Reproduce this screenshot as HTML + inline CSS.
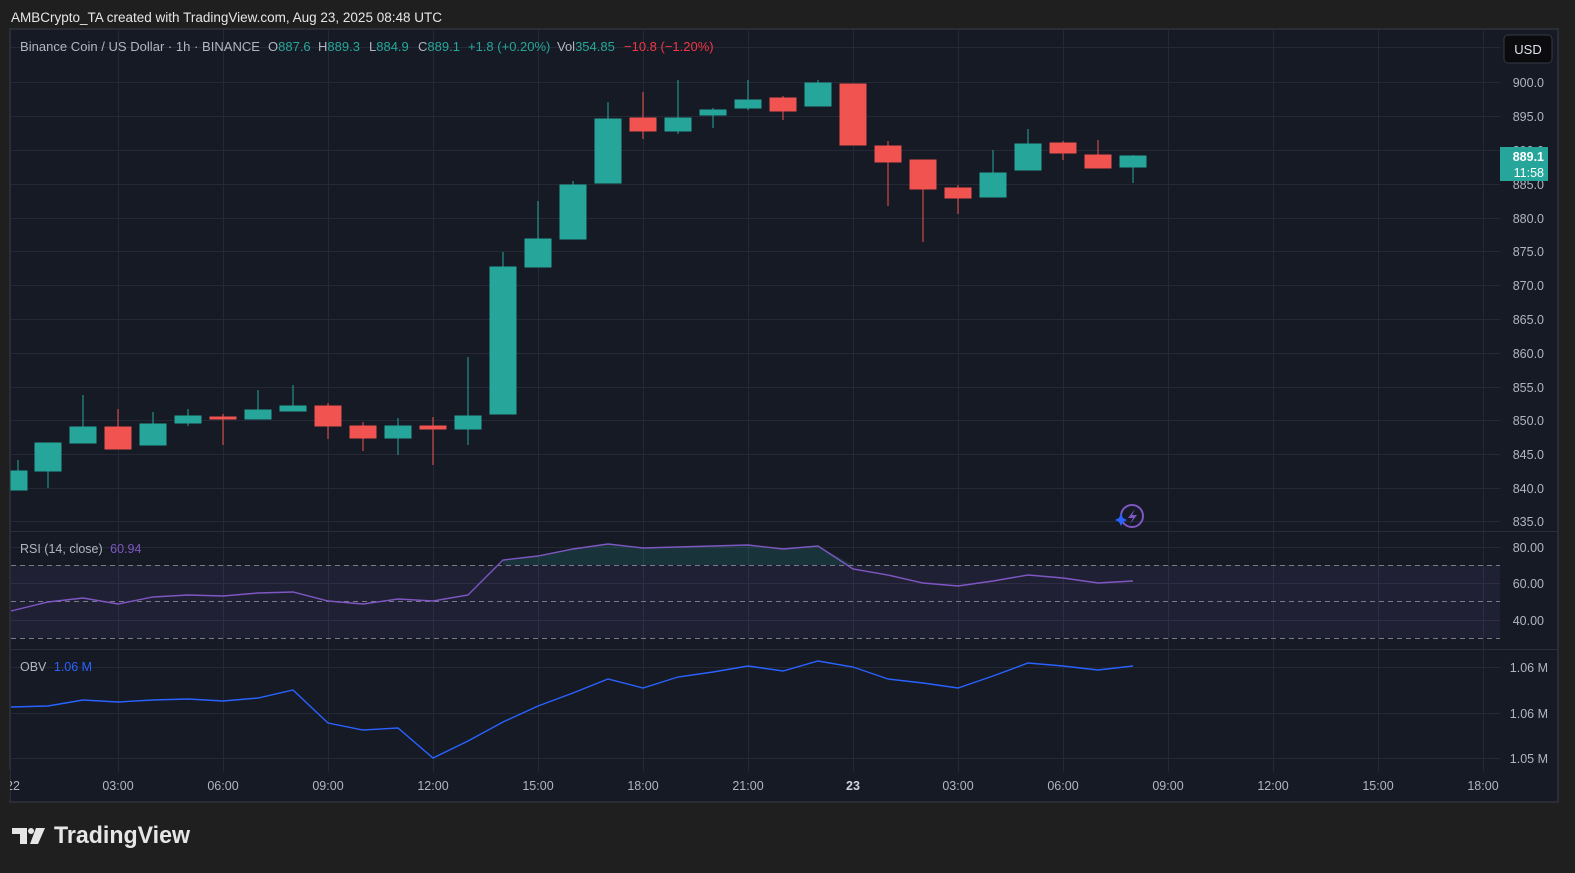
<!DOCTYPE html>
<html><head><meta charset="utf-8"><style>
html,body{margin:0;padding:0;background:#1f1f1f;width:1575px;height:873px;overflow:hidden}
svg{display:block}
text{font-family:"Liberation Sans",sans-serif}
</style></head><body>
<svg width="1575" height="873" xmlns="http://www.w3.org/2000/svg">
<rect width="1575" height="873" fill="#1f1f1f"/>
<text x="11" y="22" font-size="13.5" fill="#e6e6e6">AMBCrypto_TA created with TradingView.com, Aug 23, 2025 08:48 UTC</text>
<rect x="10" y="29" width="1548" height="773" fill="#161a25" stroke="#2a2d36" stroke-width="2"/>
<g stroke="#252935" stroke-width="1">
<line x1="11" x2="1500" y1="47.5" y2="47.5"/><line x1="11" x2="1500" y1="82.5" y2="82.5"/><line x1="11" x2="1500" y1="116.5" y2="116.5"/><line x1="11" x2="1500" y1="150.5" y2="150.5"/><line x1="11" x2="1500" y1="184.5" y2="184.5"/><line x1="11" x2="1500" y1="218.5" y2="218.5"/><line x1="11" x2="1500" y1="251.5" y2="251.5"/><line x1="11" x2="1500" y1="285.5" y2="285.5"/><line x1="11" x2="1500" y1="319.5" y2="319.5"/><line x1="11" x2="1500" y1="353.5" y2="353.5"/><line x1="11" x2="1500" y1="387.5" y2="387.5"/><line x1="11" x2="1500" y1="420.5" y2="420.5"/><line x1="11" x2="1500" y1="454.5" y2="454.5"/><line x1="11" x2="1500" y1="488.5" y2="488.5"/><line x1="11" x2="1500" y1="521.5" y2="521.5"/>
<line x1="11" x2="1500" y1="547.5" y2="547.5"/><line x1="11" x2="1500" y1="583.5" y2="583.5"/><line x1="11" x2="1500" y1="620.5" y2="620.5"/>
<line x1="11" x2="1500" y1="667.5" y2="667.5"/><line x1="11" x2="1500" y1="713.5" y2="713.5"/><line x1="11" x2="1500" y1="758.5" y2="758.5"/>
<line x1="118.5" x2="118.5" y1="30" y2="772"/><line x1="223.5" x2="223.5" y1="30" y2="772"/><line x1="328.5" x2="328.5" y1="30" y2="772"/><line x1="433.5" x2="433.5" y1="30" y2="772"/><line x1="538.5" x2="538.5" y1="30" y2="772"/><line x1="643.5" x2="643.5" y1="30" y2="772"/><line x1="748.5" x2="748.5" y1="30" y2="772"/><line x1="853.5" x2="853.5" y1="30" y2="772"/><line x1="958.5" x2="958.5" y1="30" y2="772"/><line x1="1063.5" x2="1063.5" y1="30" y2="772"/><line x1="1168.5" x2="1168.5" y1="30" y2="772"/><line x1="1273.5" x2="1273.5" y1="30" y2="772"/><line x1="1378.5" x2="1378.5" y1="30" y2="772"/><line x1="1483.5" x2="1483.5" y1="30" y2="772"/>
</g>
<line x1="11" x2="1557" y1="531.5" y2="531.5" stroke="#2a2e39"/>
<line x1="11" x2="1557" y1="649.5" y2="649.5" stroke="#2a2e39"/>
<g font-size="13" fill="#b2b5be">
<text x="20" y="51" textLength="240" lengthAdjust="spacingAndGlyphs">Binance Coin / US Dollar · 1h · BINANCE</text>
<text x="268" y="51">O<tspan fill="#26a69a">887.6</tspan></text>
<text x="318" y="51">H<tspan fill="#26a69a">889.3</tspan></text>
<text x="369" y="51">L<tspan fill="#26a69a">884.9</tspan></text>
<text x="418" y="51">C<tspan fill="#26a69a">889.1</tspan></text>
<text x="468" y="51" fill="#26a69a">+1.8 (+0.20%)</text>
<text x="557" y="51">Vol<tspan fill="#26a69a">354.85</tspan></text>
<text x="624" y="51" fill="#f23645">−10.8 (−1.20%)</text>
</g>
<g stroke-width="1">
<g stroke="#26a69a" fill="#26a69a">
<line x1="18" x2="18" y1="460" y2="490"/><rect x="11" y="471" width="16" height="19"/>
<line x1="48" x2="48" y1="443" y2="488"/><rect x="35" y="443" width="26" height="28"/>
<line x1="83" x2="83" y1="395" y2="443"/><rect x="70" y="427" width="26" height="16"/>
<line x1="153" x2="153" y1="412" y2="445"/><rect x="140" y="424" width="26" height="21"/>
<line x1="188" x2="188" y1="409" y2="426"/><rect x="175" y="416" width="26" height="7"/>
<line x1="258" x2="258" y1="390" y2="419"/><rect x="245" y="410" width="26" height="9"/>
<line x1="293" x2="293" y1="385" y2="411"/><rect x="280" y="406" width="26" height="5"/>
<line x1="398" x2="398" y1="418" y2="455"/><rect x="385" y="426" width="26" height="12"/>
<line x1="468" x2="468" y1="357" y2="445"/><rect x="455" y="416" width="26" height="13"/>
<line x1="503" x2="503" y1="252" y2="414"/><rect x="490" y="267" width="26" height="147"/>
<line x1="538" x2="538" y1="201" y2="267"/><rect x="525" y="239" width="26" height="28"/>
<line x1="573" x2="573" y1="181" y2="239"/><rect x="560" y="185" width="26" height="54"/>
<line x1="608" x2="608" y1="102" y2="183"/><rect x="595" y="119" width="26" height="64"/>
<line x1="678" x2="678" y1="80" y2="134"/><rect x="665" y="118" width="26" height="13"/>
<line x1="713" x2="713" y1="108" y2="128"/><rect x="700" y="110" width="26" height="5"/>
<line x1="748" x2="748" y1="80" y2="110"/><rect x="735" y="100" width="26" height="8"/>
<line x1="818" x2="818" y1="80" y2="106"/><rect x="805" y="83" width="26" height="23"/>
<line x1="993" x2="993" y1="150" y2="197"/><rect x="980" y="173" width="26" height="24"/>
<line x1="1028" x2="1028" y1="129" y2="170"/><rect x="1015" y="144" width="26" height="26"/>
<line x1="1133" x2="1133" y1="155" y2="183"/><rect x="1120" y="156" width="26" height="11"/>
</g>
<g stroke="#f05350" fill="#f05350">
<line x1="118" x2="118" y1="409" y2="449"/><rect x="105" y="427" width="26" height="22"/>
<line x1="223" x2="223" y1="414" y2="445"/><rect x="210" y="417" width="26" height="2"/>
<line x1="328" x2="328" y1="403" y2="439"/><rect x="315" y="406" width="26" height="20"/>
<line x1="363" x2="363" y1="422" y2="451"/><rect x="350" y="426" width="26" height="12"/>
<line x1="433" x2="433" y1="417" y2="465"/><rect x="420" y="426" width="26" height="3"/>
<line x1="643" x2="643" y1="92" y2="139"/><rect x="630" y="118" width="26" height="13"/>
<line x1="783" x2="783" y1="96" y2="120"/><rect x="770" y="98" width="26" height="13"/>
<line x1="853" x2="853" y1="84" y2="145"/><rect x="840" y="84" width="26" height="61"/>
<line x1="888" x2="888" y1="141" y2="206"/><rect x="875" y="146" width="26" height="16"/>
<line x1="923" x2="923" y1="160" y2="242"/><rect x="910" y="160" width="26" height="29"/>
<line x1="958" x2="958" y1="185" y2="214"/><rect x="945" y="188" width="26" height="10"/>
<line x1="1063" x2="1063" y1="141" y2="160"/><rect x="1050" y="143" width="26" height="10"/>
<line x1="1098" x2="1098" y1="140" y2="168"/><rect x="1085" y="155" width="26" height="13"/>
</g>
</g>
<rect x="11" y="565" width="1489" height="73" fill="#7e57c2" fill-opacity="0.1"/>
<g stroke="#787b86" stroke-width="1" stroke-dasharray="5,4">
<line x1="11" x2="1500" y1="565.5" y2="565.5"/><line x1="11" x2="1500" y1="601.5" y2="601.5"/><line x1="11" x2="1500" y1="638.5" y2="638.5"/>
</g>
<polygon points="503,565 503,560 538,556 573,549 608,544 643,548 678,547 713,546 748,545 783,549 818,546 853,565" fill="#26a69a" fill-opacity="0.18"/>
<polyline fill="none" stroke="#7e57c2" stroke-width="1.4" points="11,611 48,602 83,598 118,604 153,597 188,595 223,596 258,593 293,592 328,601 363,604 398,599 433,601 468,595 503,560 538,556 573,549 608,544 643,548 678,547 713,546 748,545 783,549 818,546 853,569 888,575 923,583 958,586 993,581 1028,575 1063,578 1098,583 1133,581"/>
<text x="20" y="553" font-size="12.5" fill="#b2b5be">RSI (14, close) <tspan dx="4" fill="#7e57c2">60.94</tspan></text>
<polyline fill="none" stroke="#2962ff" stroke-width="1.4" points="11,707 48,706 83,700 118,702 153,700 188,699 223,701 258,698 293,690 328,723 363,730 398,728 433,758 468,741 503,722 538,706 573,693 608,679 643,688 678,677 713,672 748,666 783,671 818,661 853,667 888,679 923,683 958,688 993,676 1028,663 1063,666 1098,670 1133,666"/>
<text x="20" y="671" font-size="12.5" fill="#b2b5be">OBV <tspan dx="4" fill="#2962ff">1.06 M</tspan></text>
<circle cx="1132" cy="516" r="11" fill="none" stroke="#7e57c2" stroke-width="2"/>
<path d="M1135 509 L1128 518 L1133 518 L1130 524 L1137 515 L1132 515 Z" fill="#7e57c2"/>
<path d="M1121 513 L1123 518 L1127 520 L1123 522 L1121 526 L1119 522 L1115 520 L1119 518 Z" fill="#2962ff"/>
<rect x="1504" y="35" width="48" height="28" rx="4" fill="#0b0b0d" stroke="#363a45"/>
<text x="1528" y="54" font-size="13" fill="#e0e3eb" text-anchor="middle">USD</text>
<g font-size="12.5" fill="#b2b5be" text-anchor="end">
<text x="1544" y="87">900.0</text><text x="1544" y="121">895.0</text><text x="1544" y="155">890.0</text><text x="1544" y="189">885.0</text><text x="1544" y="223">880.0</text><text x="1544" y="256">875.0</text><text x="1544" y="290">870.0</text><text x="1544" y="324">865.0</text><text x="1544" y="358">860.0</text><text x="1544" y="392">855.0</text><text x="1544" y="425">850.0</text><text x="1544" y="459">845.0</text><text x="1544" y="493">840.0</text><text x="1544" y="526">835.0</text>
<text x="1544" y="552">80.00</text><text x="1544" y="588">60.00</text><text x="1544" y="625">40.00</text>
<text x="1548" y="672">1.06 M</text><text x="1548" y="718">1.06 M</text><text x="1548" y="763">1.05 M</text>
</g>
<rect x="1500" y="147" width="48" height="34" fill="#26a69a"/>
<text x="1544" y="161" font-size="12.5" fill="#ffffff" text-anchor="end" font-weight="bold">889.1</text>
<text x="1544" y="177" font-size="12.5" fill="#ffffff" text-anchor="end">11:58</text>
<g font-size="12.5" fill="#b2b5be" text-anchor="middle">
<text x="13" y="790">22</text><text x="118" y="790">03:00</text><text x="223" y="790">06:00</text><text x="328" y="790">09:00</text><text x="433" y="790">12:00</text><text x="538" y="790">15:00</text><text x="643" y="790">18:00</text><text x="748" y="790">21:00</text><text x="853" y="790" font-weight="bold" fill="#d1d4dc">23</text><text x="958" y="790">03:00</text><text x="1063" y="790">06:00</text><text x="1168" y="790">09:00</text><text x="1273" y="790">12:00</text><text x="1378" y="790">15:00</text><text x="1483" y="790">18:00</text>
</g>
<rect x="0" y="770" width="10" height="30" fill="#1f1f1f"/>
<g fill="#e6e6e6">
<path d="M12 828 H27 V844 H20 V834 H12 Z"/>
<circle cx="31" cy="831" r="3"/>
<path d="M36 828 H45 L38 844 H30 Z"/>
</g>
<text x="54" y="843" font-size="24" font-weight="bold" fill="#e6e6e6" textLength="136" lengthAdjust="spacingAndGlyphs">TradingView</text>
</svg>
</body></html>
